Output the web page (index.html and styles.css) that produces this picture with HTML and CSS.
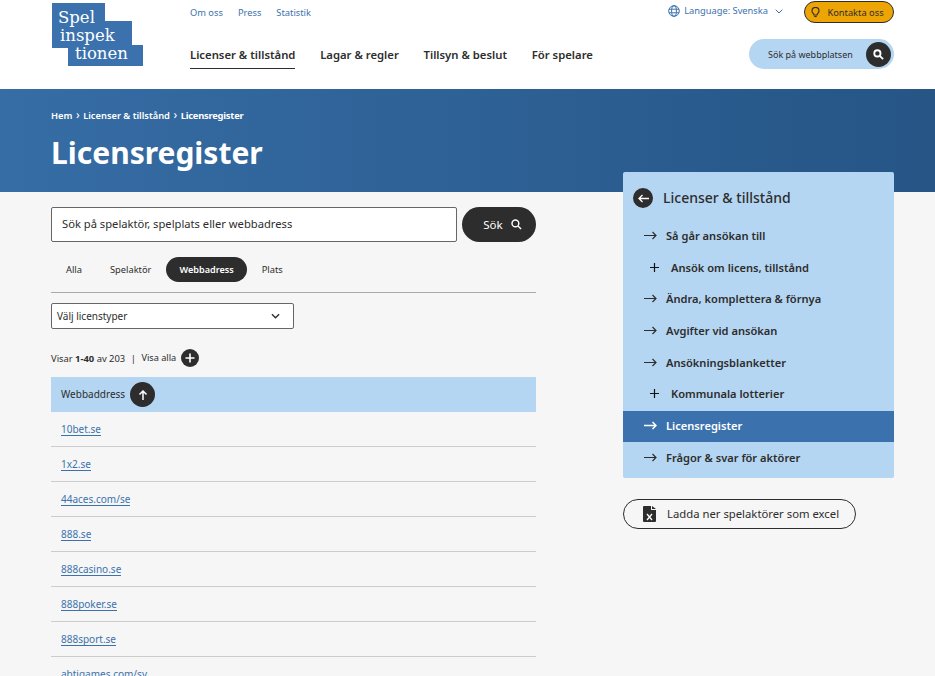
FILE: index.html
```html
<!DOCTYPE html>
<html lang="sv">
<head>
    <meta charset="UTF-8">
    <meta name="viewport" content="width=device-width, initial-scale=1.0">
    <title>Licensregister</title>
    <link rel="stylesheet" href="styles.css">
</head>
<body>

<header class="site-header">
    <svg class="logo" width="91" height="63" viewBox="0 0 91 63">
        <polygon points="0,0 53,0 53,18 80,18 80,42 91,42 91,63 16,63 16,45 0,45" fill="#3b72ad"/>
        <text class="logo-text" x="6" y="19.500">Spel</text>
        <text class="logo-text" x="8" y="37.500">inspek</text>
        <text class="logo-text" x="23" y="55.500">tionen</text>
    </svg>

    <div class="header-nav">
        <nav class="top-links">
            <a href="#">Om oss</a>
            <a href="#">Press</a>
            <a href="#">Statistik</a>
        </nav>
        <nav class="main-links">
            <a href="#" class="current">Licenser &amp; tillstånd</a>
            <a href="#">Lagar &amp; regler</a>
            <a href="#">Tillsyn &amp; beslut</a>
            <a href="#">För spelare</a>
        </nav>
    </div>

    <div class="header-tools">
        <div class="tools-row">
            <a href="#" class="language">
                <svg width="12" height="12" viewBox="0 0 12 12" fill="none" stroke="#3b72ad" stroke-width="1">
                    <circle cx="6" cy="6" r="5.300"/>
                    <ellipse cx="6" cy="6" rx="2.400" ry="5.300"/>
                    <path d="M1 4.200h10M1 7.800h10"/>
                </svg>
                Language: Svenska
                <svg class="lang-caret" width="8" height="5" viewBox="0 0 8 5" fill="none" stroke="#3b72ad" stroke-width="1">
                    <path d="M.7.7 4 4l3.300-3.300"/>
                </svg>
            </a>
            <a href="#" class="contact">
                <svg width="9" height="11" viewBox="0 0 9 11" fill="none" stroke="#2d2d2d" stroke-width="1.100">
                    <path d="M3 8C3 6.600 1 6 1 3.900a3.500 3.500 0 0 1 7 0C8 6 6 6.600 6 8z"/>
                    <path d="M3.300 9.500h2.400"/>
                </svg>
                Kontakta oss
            </a>
        </div>
        <div class="site-search">
            <span>Sök på webbplatsen</span>
            <span class="site-search-btn">
                <svg width="11" height="11" viewBox="0 0 12 12" fill="none" stroke="#fff" stroke-width="2">
                    <circle cx="4.800" cy="4.800" r="3.400"/>
                    <path d="M7.400 7.400 11 11"/>
                </svg>
            </span>
        </div>
    </div>
</header>

<section class="hero">
    <div class="breadcrumb">
        <a href="#">Hem</a><span class="sep">›</span><a href="#">Licenser &amp; tillstånd</a><span class="sep">›</span><span class="crumb-current">Licensregister</span>
    </div>
    <h1>Licensregister</h1>
</section>

<div class="page">
    <main class="content">
        <div class="search-row">
            <div class="search-input">Sök på spelaktör, spelplats eller webbadress</div>
            <button class="search-btn">
                Sök
                <svg width="11" height="11" viewBox="0 0 12 12" fill="none" stroke="#fff" stroke-width="1.600">
                    <circle cx="4.800" cy="4.800" r="3.700"/>
                    <path d="M7.600 7.600 11 11"/>
                </svg>
            </button>
        </div>

        <div class="tabs">
            <a href="#">Alla</a>
            <a href="#">Spelaktör</a>
            <a href="#" class="active">Webbadress</a>
            <a href="#">Plats</a>
        </div>

        <div class="select-box">
            Välj licenstyper
            <svg width="9" height="6" viewBox="0 0 10 6" fill="none" stroke="#2d2d2d" stroke-width="1.500">
                <path d="M1 1l4 4 4-4"/>
            </svg>
        </div>

        <div class="count-row">
            <span>Visar <b>1-40</b> av 203</span>
            <span class="divider">|</span>
            <a href="#">Visa alla</a>
            <span class="round-btn small">
                <svg width="10" height="10" viewBox="0 0 10 10" stroke="#fff" stroke-width="1.600"><path d="M5 .5v9M.5 5h9"/></svg>
            </span>
        </div>

        <div class="table-head">
            <span class="lift">Webbaddress</span>
            <span class="round-btn">
                <svg width="10" height="10" viewBox="0 0 10 10" fill="none" stroke="#fff" stroke-width="1.500"><path d="M5 10V1M1.500 4.500 5 1l3.500 3.500"/></svg>
            </span>
        </div>
        <ul class="rows">
            <li><a href="#">10bet.se</a></li>
            <li><a href="#">1x2.se</a></li>
            <li><a href="#">44aces.com/se</a></li>
            <li><a href="#">888.se</a></li>
            <li><a href="#">888casino.se</a></li>
            <li><a href="#">888poker.se</a></li>
            <li><a href="#">888sport.se</a></li>
            <li><a href="#">abtigames.com/sv</a></li>
        </ul>
    </main>

    <aside class="sidebar">
        <div class="side-menu">
            <div class="side-title">
                <span class="round-btn large">
                    <svg width="11" height="9" viewBox="0 0 11 9" fill="none" stroke="#fff" stroke-width="1.300"><path d="M11 4.500H1M4.500 1 1 4.500 4.500 8"/></svg>
                </span>
                <span class="lift">Licenser &amp; tillstånd</span>
            </div>
            <a href="#" class="side-item"><svg class="arrow" width="13" height="9" viewBox="0 0 13 9"><path d="M0 4.500h12M8.500 1 12 4.500 8.500 8"/></svg>Så går ansökan till</a>
            <a href="#" class="side-item sub"><svg class="plus" width="9" height="9" viewBox="0 0 9 9"><path d="M4.500 0v9M0 4.500h9"/></svg>Ansök om licens, tillstånd</a>
            <a href="#" class="side-item"><svg class="arrow" width="13" height="9" viewBox="0 0 13 9"><path d="M0 4.500h12M8.500 1 12 4.500 8.500 8"/></svg>Ändra, komplettera &amp; förnya</a>
            <a href="#" class="side-item"><svg class="arrow" width="13" height="9" viewBox="0 0 13 9"><path d="M0 4.500h12M8.500 1 12 4.500 8.500 8"/></svg>Avgifter vid ansökan</a>
            <a href="#" class="side-item"><svg class="arrow" width="13" height="9" viewBox="0 0 13 9"><path d="M0 4.500h12M8.500 1 12 4.500 8.500 8"/></svg>Ansökningsblanketter</a>
            <a href="#" class="side-item sub"><svg class="plus" width="9" height="9" viewBox="0 0 9 9"><path d="M4.500 0v9M0 4.500h9"/></svg>Kommunala lotterier</a>
            <a href="#" class="side-item active"><svg class="arrow" width="13" height="9" viewBox="0 0 13 9"><path d="M0 4.500h12M8.500 1 12 4.500 8.500 8"/></svg>Licensregister</a>
            <a href="#" class="side-item"><svg class="arrow" width="13" height="9" viewBox="0 0 13 9"><path d="M0 4.500h12M8.500 1 12 4.500 8.500 8"/></svg>Frågor &amp; svar för aktörer</a>
        </div>

        <a href="#" class="download">
            <svg width="13" height="16" viewBox="0 0 13 16">
                <path d="M1 0h7v4h5v11a1 1 0 0 1-1 1H1a1 1 0 0 1-1-1V1a1 1 0 0 1 1-1zM9 0l4 3H9z" fill="#2d2d2d"/>
                <path d="M4 8l5 6M9 8l-5 6" stroke="#fff" stroke-width="1.300"/>
            </svg>
            <span class="lift">Ladda ner spelaktörer som excel</span>
        </a>
    </aside>
</div>

</body>
</html>
```

FILE: styles.css
```css
html, body {
    height: 100%;
    overflow: hidden;
}

body {
    margin: 0;
    background-color: #f6f6f6;
    color: #2d2d2d;
    font-family: "Noto Sans", sans-serif;
}

a {
    color: inherit;
    text-decoration: none;
}

/* nudges text up a pixel next to icons */
.lift {
    padding-bottom: 2px;
}

/* header */
.site-header {
    height: 89px;
    box-sizing: border-box;
    padding: 3px 41px 0 52px;
    background-color: #fff;
    display: flex;
    align-items: flex-start;
}

.logo {
    flex-shrink: 0;
}

.logo-text {
    font-family: "DejaVu Serif", serif;
    font-size: 16.5px;
    fill: #fff;
}

.header-nav {
    margin-left: 47px;
}

.top-links {
    display: flex;
    gap: 15px;
    font-size: 9.3px;
    line-height: 13px;
    margin-top: 3px;
    color: #3b72ad;
}

.main-links {
    display: flex;
    gap: 24.7px;
    margin-top: 28px;
    font-size: 11.3px;
    font-weight: 600;
    line-height: 16px;
}

.main-links a {
    padding-bottom: 5px;
}

.main-links .current {
    border-bottom: 1px solid #2d2d2d;
}

.header-tools {
    margin-left: auto;
    display: flex;
    flex-direction: column;
    align-items: flex-end;
}

.tools-row {
    display: flex;
    align-items: flex-start;
    margin-top: -2px;
}

.language {
    display: flex;
    align-items: center;
    gap: 4px;
    margin-top: 3px;
    font-size: 9.3px;
    line-height: 14px;
    color: #3b72ad;
}

.lang-caret {
    margin-left: 3px;
}

.contact {
    margin-left: 21px;
    width: 90px;
    height: 22px;
    box-sizing: border-box;
    padding-right: 3px;
    display: flex;
    align-items: center;
    justify-content: center;
    gap: 7px;
    background-color: #eda505;
    border: 1px solid #2d2d2d;
    border-radius: 11px;
    font-size: 9.3px;
}

.site-search {
    margin-top: 16px;
    width: 145px;
    height: 30px;
    box-sizing: border-box;
    padding: 0 3px 0 19px;
    display: flex;
    align-items: center;
    justify-content: space-between;
    background-color: #b5d6f2;
    border-radius: 15px;
    font-size: 9px;
}

.site-search-btn {
    width: 25px;
    height: 25px;
    display: flex;
    align-items: center;
    justify-content: center;
    background-color: #2d2d2d;
    border-radius: 50%;
}

/* hero */
.hero {
    height: 103px;
    box-sizing: border-box;
    padding: 19px 51px 0;
    background: linear-gradient(90deg, #366da5 0%, #265586 100%);
    color: #fff;
}

.breadcrumb {
    font-size: 9.3px;
    font-weight: 600;
    line-height: 14px;
}

.sep {
    margin: 0 3.5px;
    font-size: 12px;
    font-weight: 400;
}

.crumb-current {
    font-weight: 700;
    letter-spacing: -0.2px;
}

.hero h1 {
    margin: 9px 0 0;
    font-size: 30px;
    font-weight: 700;
    line-height: 42px;
}

/* page columns */
.page {
    padding: 0 41px 0 51px;
    display: flex;
    justify-content: space-between;
    align-items: flex-start;
}

.content {
    width: 485px;
    padding-top: 15px;
}

.search-row {
    display: flex;
    gap: 5px;
}

.search-input {
    flex: 1;
    height: 35px;
    box-sizing: border-box;
    padding: 0 0 2px 10px;
    display: flex;
    align-items: center;
    background-color: #fff;
    border: 1px solid #666;
    border-radius: 2px;
    font-size: 11.2px;
}

.search-btn {
    width: 74px;
    height: 35px;
    display: flex;
    align-items: center;
    justify-content: center;
    gap: 8px;
    padding: 0 0 0 7px;
    background-color: #2d2d2d;
    color: #fff;
    border: 0;
    border-radius: 18px;
    font-family: inherit;
    font-size: 11.5px;
}

.tabs {
    margin-top: 15px;
    padding: 0 0 10px 1px;
    display: flex;
    border-bottom: 1px solid #aaa;
    font-size: 9.3px;
}

.tabs a {
    height: 25px;
    line-height: 25px;
    padding: 0 14px;
    border-radius: 13px;
}

.tabs .active {
    margin: 0 1px;
    padding: 0 13px;
    background-color: #2d2d2d;
    color: #fff;
    font-size: 9.1px;
    font-weight: 600;
}

.select-box {
    margin-top: 10px;
    width: 243px;
    height: 26px;
    box-sizing: border-box;
    padding: 0 13px 0 5px;
    display: flex;
    align-items: center;
    justify-content: space-between;
    background-color: #fff;
    border: 1px solid #666;
    border-radius: 2px;
    font-size: 10px;
}

.count-row {
    margin-top: 20px;
    height: 18px;
    display: flex;
    align-items: center;
    font-size: 9.4px;
}

.divider {
    margin: 0 5.5px;
}

.count-row a {
    margin-right: 5px;
    padding-bottom: 2px;
    font-size: 9.2px;
}

.round-btn {
    display: flex;
    align-items: center;
    justify-content: center;
    width: 25px;
    height: 25px;
    background-color: #2d2d2d;
    border-radius: 50%;
    flex-shrink: 0;
}

.round-btn.small {
    width: 18px;
    height: 18px;
}

.round-btn.large {
    width: 20px;
    height: 20px;
}

.table-head {
    margin-top: 10px;
    height: 35px;
    padding-left: 10px;
    display: flex;
    align-items: center;
    gap: 5px;
    background-color: #b5d6f2;
    font-size: 10px;
}

.rows {
    margin: 0;
    padding: 0;
    list-style: none;
}

.rows li {
    height: 35px;
    box-sizing: border-box;
    padding-left: 10px;
    display: flex;
    align-items: center;
    border-bottom: 1px solid #ccc;
    font-size: 10px;
}

.rows a {
    color: #3b72ad;
    border-bottom: 1px solid #3b72ad;
    line-height: 12px;
}

/* sidebar */
.sidebar {
    width: 271px;
    margin-top: -20px;
}

.side-menu {
    background-color: #b5d6f2;
    border-radius: 2px;
    padding: 16px 0 4px;
}

.side-title {
    display: flex;
    align-items: center;
    gap: 10px;
    padding-left: 10px;
    height: 20px;
    margin-bottom: 12.500px;
    font-size: 14px;
    font-weight: 500;
}

.side-item {
    height: 31.7px;
    box-sizing: border-box;
    padding: 0 0 2px 21px;
    display: flex;
    align-items: center;
    font-size: 11.1px;
    font-weight: 600;
}

.side-item svg {
    fill: none;
    stroke: #2d2d2d;
    stroke-width: 1.2;
}

.side-item .arrow {
    margin-right: 9px;
}

.side-item .plus {
    stroke: #111;
    margin: 0 12px 0 6px;
}

.side-item.active {
    background-color: #3b72ad;
    color: #fff;
}

.side-item.active svg {
    stroke: #fff;
    stroke-width: 1.5;
}

.download {
    margin-top: 21px;
    width: 233px;
    height: 30px;
    box-sizing: border-box;
    padding-left: 19px;
    display: flex;
    align-items: center;
    gap: 11px;
    border: 1px solid #2d2d2d;
    border-radius: 15px;
    font-size: 11.3px;
}
```
